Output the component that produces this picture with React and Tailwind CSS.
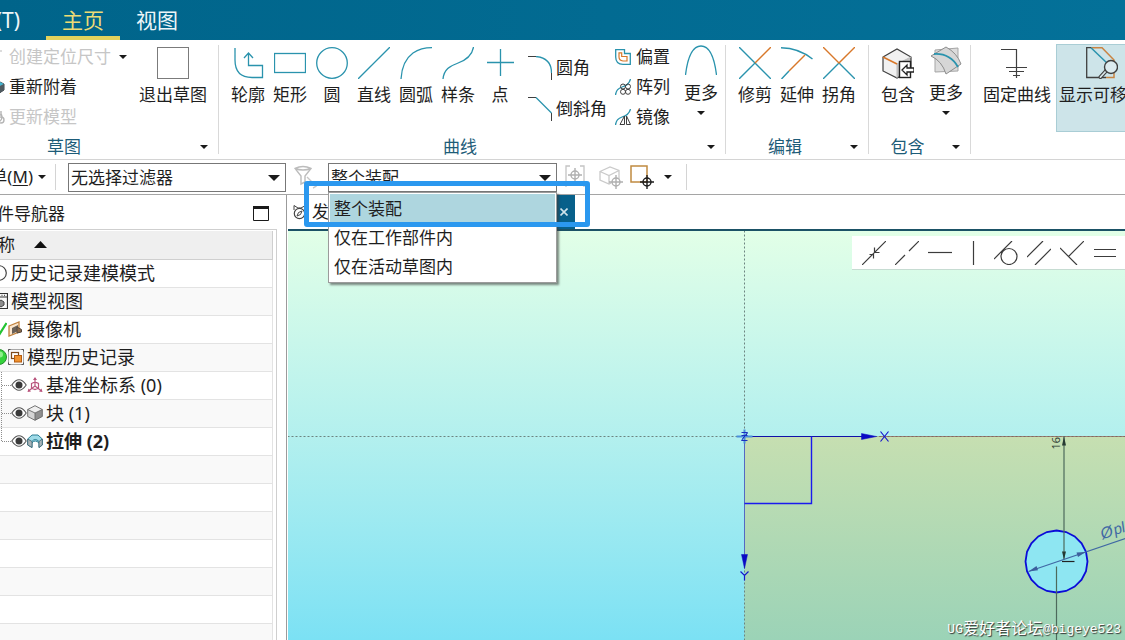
import React from "react";

const TEAL = "#2a93ad";
const INK = "#3f3f3f";
const ORANGE = "#d8782a";

function Icon({ w = 32, h = 32, children, className = "" }) {
  return (
    <svg
      width={w}
      height={h}
      viewBox={`0 0 ${w} ${h}`}
      fill="none"
      aria-hidden="true"
      className={`shrink-0 ${className}`}
    >
      {children}
    </svg>
  );
}

function Caret({ large = false, className = "" }) {
  return large ? (
    <Icon w={12} h={6} className={className}>
      <path d="M0 0H12L6 6Z" fill="#1a1a1a" />
    </Icon>
  ) : (
    <Icon w={8} h={4} className={className}>
      <path d="M0 0H8L4 4Z" fill="#1a1a1a" />
    </Icon>
  );
}

function Group({ label, className = "", bodyClass = "", children }) {
  return (
    <section className={`flex shrink-0 flex-col pt-0.5 ${className}`}>
      <div className={`flex h-[90px] items-start ${bodyClass}`}>{children}</div>
      <div className="flex h-[27px] items-center pt-[3px]">
        <span className="flex-1 text-center text-[#1d5c78]">{label}</span>
        <button aria-label={`${label}选项`} className="flex w-6 items-center pl-1.5">
          <Caret />
        </button>
      </div>
    </section>
  );
}

function Divider() {
  return <div className="my-[5px] w-px shrink-0 bg-[#d9d9d9]" />;
}

function BigButton({ label, className = "w-[42px]", children }) {
  return (
    <button className={`flex shrink-0 flex-col items-center gap-1 pt-[5px] ${className}`}>
      {children}
      <span className="leading-6">{label}</span>
    </button>
  );
}

function MoreButton({ className = "w-[42px]", name, children }) {
  return (
    <button aria-label={name} className={`flex shrink-0 flex-col items-center pt-[3px] ${className}`}>
      {children}
      <span className="mt-1 leading-6">更多</span>
      <Caret className="mt-1.5" />
    </button>
  );
}

function SmallButton({ label, className = "", disabled = false, children }) {
  return (
    <button
      disabled={disabled}
      className={`flex items-center whitespace-nowrap ${disabled ? "text-[#c6c6c6]" : ""} ${className}`}
    >
      {children}
      {label}
    </button>
  );
}

function Header() {
  return (
    <header className="flex h-10 shrink-0 items-stretch bg-linear-to-r from-[#00648a] to-[#047199] text-[21px] text-[#eef6f8]">
      <button className="flex w-[46px] items-center justify-end overflow-hidden pt-0.5 pr-[26px] whitespace-nowrap">
        工具(T)
      </button>
      <button className="border-b-4 border-[#e3d25c] px-4 pt-1 leading-8 text-[#eddc75]">主页</button>
      <button className="border-b-4 border-transparent px-4 pt-1 leading-8">视图</button>
    </header>
  );
}

function Ribbon() {
  return (
    <div className="flex shrink-0 overflow-hidden border-b border-[#d4d4d4] bg-white text-[17px] leading-6 text-[#1e1e1e]">
      <Group label="草图" className="-ml-[66px] w-[284px]" bodyClass="pl-[55px]">
        <div className="flex flex-col">
          <div className="flex items-center gap-2">
            <SmallButton label="创建定位尺寸" disabled className="h-[30px] gap-1">
              <Icon w={16} h={16}>
                <path d="M2 14V2H13" stroke="#b9b9b9" />
              </Icon>
            </SmallButton>
            <button aria-label="创建定位尺寸选项">
              <Caret />
            </button>
          </div>
          <SmallButton label="重新附着" className="h-[30px] gap-1">
            <Icon w={16} h={16}>
              <path d="M2 5L9 2L15 5V11L9 15L2 12Z" fill="#77848b" stroke="#3c464b" />
              <path d="M2 5L9 2L15 5L9 8Z" fill="#43b5d0" />
              <path d="M9 8V15L15 11V5Z" fill="#4f5a60" />
            </Icon>
          </SmallButton>
          <SmallButton label="更新模型" disabled className="h-[30px] gap-1">
            <Icon w={16} h={16}>
              <path d="M3 11a5 5 0 1 0 9-6M12 2v4H8" stroke="#b5b5b5" strokeWidth="1.4" />
              <circle cx="12" cy="11" r="3" stroke="#b5b5b5" strokeWidth="1.4" />
            </Icon>
          </SmallButton>
        </div>
        <BigButton label="退出草图" className="ml-3 w-[68px] whitespace-nowrap">
          <Icon>
            <rect x="0.5" y="0.5" width="31" height="31" stroke="#7b7b7b" />
          </Icon>
        </BigButton>
      </Group>
      <Divider />

      <Group label="曲线" className="w-[506px]" bodyClass="pl-2">
        <BigButton label="轮廓">
          <Icon>
            <path d="M3 1V13Q3 30.5 20 30.5H30.500V18.500H16.500V6M12 11L16.500 6L21 11" stroke={TEAL} strokeWidth="1.3" />
          </Icon>
        </BigButton>
        <BigButton label="矩形">
          <Icon>
            <rect x="0.5" y="6.500" width="31" height="19" stroke={TEAL} strokeWidth="1.3" />
          </Icon>
        </BigButton>
        <BigButton label="圆">
          <Icon>
            <circle cx="16" cy="16" r="15.300" stroke={TEAL} strokeWidth="1.3" />
          </Icon>
        </BigButton>
        <BigButton label="直线">
          <Icon>
            <path d="M0 32L32 0" stroke={TEAL} strokeWidth="1.3" />
          </Icon>
        </BigButton>
        <BigButton label="圆弧">
          <Icon>
            <path d="M1 32Q2 14 13 6Q21 0.700 32 0.700" stroke={TEAL} strokeWidth="1.300" />
          </Icon>
        </BigButton>
        <BigButton label="样条">
          <Icon>
            <path d="M1 32C2 22 8 19 15 16.500S30 10 31.500 0" stroke={TEAL} strokeWidth="1.3" />
          </Icon>
        </BigButton>
        <BigButton label="点">
          <Icon>
            <path d="M3 15.500H30M16.500 2V29" stroke={TEAL} strokeWidth="1.3" />
          </Icon>
        </BigButton>
        <div className="flex flex-col pt-[5px] pl-[7px]">
          <SmallButton label="圆角" className="h-[41px] gap-1">
            <Icon w={24} h={24}>
              <path d="M0 0.500H8M23.500 17V24" stroke={INK} />
              <path d="M8 0.500Q23.500 2 23.500 17" stroke={TEAL} strokeWidth="1.3" />
            </Icon>
          </SmallButton>
          <SmallButton label="倒斜角" className="h-[41px] gap-1">
            <Icon w={24} h={24}>
              <path d="M0 0.500H8M23.500 16V24" stroke={INK} />
              <path d="M8 0.500L23.500 16" stroke={TEAL} strokeWidth="1.3" />
            </Icon>
          </SmallButton>
        </div>
        <div className="flex flex-col pl-2">
          <SmallButton label="偏置" className="h-[30px] gap-[5px]">
            <Icon w={16} h={16}>
              <path d="M0.700 0.700H9.500V4.500H15.300V15.300H8Q0.700 15.300 0.700 8Z" stroke={TEAL} strokeWidth="1.300" />
              <path d="M4 3.800H6.700V7.500H12V12H8Q4 11.500 4 8Z" stroke={ORANGE} strokeWidth="1.200" />
            </Icon>
          </SmallButton>
          <SmallButton label="阵列" className="h-[30px] gap-[5px]">
            <Icon w={16} h={16}>
              <path d="M0.500 16Q1 10 7 8Q14 6 15.500 0" stroke={TEAL} strokeWidth="1.300" />
              <g stroke={INK}>
                <circle cx="8" cy="7.500" r="2.500" />
                <circle cx="13" cy="7.500" r="2.500" />
                <circle cx="8" cy="12.800" r="2.500" />
                <circle cx="13" cy="12.800" r="2.500" />
              </g>
            </Icon>
          </SmallButton>
          <SmallButton label="镜像" className="h-[30px] gap-[5px]">
            <Icon w={16} h={16}>
              <path d="M0.500 16Q1 10 7 8Q14 6 15.500 0" stroke={TEAL} strokeWidth="1.300" />
              <path d="M9.500 7V15.500H5ZM11.500 7V15.500H15.500Z" stroke={INK} fill="#fff" />
            </Icon>
          </SmallButton>
        </div>
        <MoreButton name="更多曲线" className="ml-[10px] w-[42px]">
          <Icon>
            <path d="M0.500 30Q4 1 16 1T31.500 30" stroke={TEAL} strokeWidth="1.3" />
          </Icon>
        </MoreButton>
      </Group>
      <Divider />

      <Group label="编辑" className="w-[142px]" bodyClass="pl-2">
        <BigButton label="修剪">
          <Icon>
            <path d="M0 0L32 32M0 32L16 16" stroke={TEAL} strokeWidth="1.400" />
            <path d="M16 16L32 0" stroke={ORANGE} strokeWidth="1.400" />
          </Icon>
        </BigButton>
        <BigButton label="延伸">
          <Icon>
            <path d="M0 0.700Q18 1 31.500 12M0.500 32L8 24" stroke={TEAL} strokeWidth="1.400" />
            <path d="M8 24L24 8" stroke={ORANGE} strokeWidth="1.400" />
          </Icon>
        </BigButton>
        <BigButton label="拐角">
          <Icon>
            <path d="M0 32L16 16L32 32" stroke={TEAL} strokeWidth="1.400" />
            <path d="M0 0L16 16L32 0" stroke={ORANGE} strokeWidth="1.400" />
          </Icon>
        </BigButton>
      </Group>
      <Divider />

      <Group label="包含" className="w-[101px]" bodyClass="pl-[5px]">
        <BigButton label="包含" className="w-12">
          <Icon>
            <path d="M1 10L15 2L29 10V24L15 31L1 24Z" fill="#f1f1f1" />
            <path d="M15 17L29 10V24L15 31Z" fill="#c3c3c3" />
            <path d="M1 10L15 2L29 10V24L15 31L1 24Z" stroke={INK} strokeWidth="1.200" />
            <path d="M29 10L15 17V31" stroke="#bdbdbd" />
            <path d="M1 10L15 17" stroke={ORANGE} strokeWidth="1.600" />
            <rect x="17.500" y="14.500" width="11" height="16" fill="#fff" stroke="#222" strokeWidth="1.400" />
            <path d="M20 23L25 18V21H32V25H25V28Z" fill="#fff" stroke="#222" strokeWidth="1.300" />
          </Icon>
        </BigButton>
        <MoreButton name="更多包含" className="w-12">
          <Icon>
            <path d="M5 5L28 3V26L5 27Z" fill="#dcdcdc" stroke="#a5a5a5" />
            <path d="M1 11L16 2Q27 8 31 19L16 29Q12 16 1 11Z" fill="#d6d6d6" stroke="#8d8d8d" />
            <path d="M4 9Q20 8 28 22" stroke={TEAL} strokeWidth="1.800" />
          </Icon>
        </MoreButton>
      </Group>
      <Divider />

      <div className="flex shrink-0 items-start gap-[5px] pt-0.5 pl-3">
        <BigButton label="固定曲线" className="w-[68px] whitespace-nowrap">
          <Icon>
            <path d="M0 2.500H15.500V31M5 20.500H26M8 24.500H23M12 28.500H19" stroke={INK} strokeWidth="1.200" />
          </Icon>
        </BigButton>
        <BigButton
          label="显示可移动"
          className="mt-0.5 h-[88px] w-[91px] border border-[#a9cdd5] bg-[#cde4e9] !pt-0.5 whitespace-nowrap"
        >
          <Icon>
            <path d="M5 0.700H0.700V30.500H20" stroke={INK} strokeWidth="1.300" />
            <path d="M5 0.700H16L28 13V30.500H20" stroke="#c98443" strokeWidth="1.500" />
            <path d="M5 0.700L22 17" stroke={TEAL} strokeWidth="1.500" />
            <path d="M20 24L14.500 30" stroke={INK} strokeWidth="4" strokeLinecap="round" />
            <path d="M20 24L14.500 30" stroke="#d9e6e9" strokeWidth="1.800" strokeLinecap="round" />
            <circle cx="25" cy="20" r="6.500" fill="#dcebef" stroke={INK} strokeWidth="1.400" />
          </Icon>
        </BigButton>
      </div>
    </div>
  );
}

function Crosshair({ x, y, color }) {
  return (
    <g stroke={color} strokeWidth="1.400">
      <circle cx={x} cy={y} r="4" />
      <path d={`M${x - 7} ${y}H${x + 7}M${x} ${y - 7}V${y + 7}`} />
    </g>
  );
}

function SelectionBar() {
  const options = ["整个装配", "仅在工作部件内", "仅在活动草图内"];
  return (
    <div className="flex h-[35px] shrink-0 items-center border-b border-[#a5a5a5] bg-white text-[17px] text-[#1e1e1e]">
      <button className="flex w-[33px] items-center justify-end overflow-hidden whitespace-nowrap">
        菜单(<u className="underline-offset-2">M</u>)
      </button>
      <Caret className="ml-[5px]" />
      <div className="ml-[9px] h-[26px] w-px bg-[#d4d4d4]" />
      <div className="relative ml-3">
        <select
          aria-label="类型过滤器"
          className="block h-[29px] w-[218px] appearance-none border border-[#777] bg-white pt-0.5 pl-0.5 leading-6"
        >
          <option>无选择过滤器</option>
        </select>
        <Caret large className="pointer-events-none absolute top-3 right-1.5" />
      </div>
      <button aria-label="重置过滤器" className="ml-2">
        <Icon w={24} h={24}>
          <path d="M1 3.500Q9 -0.500 17 3.500L11 11V17L7 19V11ZM1 3.500Q9 6.500 17 3.500" stroke="#bcbcbc" strokeWidth="1.400" />
          <path d="M13 12L18 17M19 23Q22 22 24 19" stroke="#c6c6c6" strokeWidth="1.400" />
        </Icon>
      </button>
      <div className="relative ml-2.5">
        <select
          aria-label="选择范围"
          className="block h-[29px] w-[229px] appearance-none border border-[#777] bg-white pt-0.5 pl-0.5 leading-6"
        >
          {options.map((o) => (
            <option key={o}>{o}</option>
          ))}
        </select>
        <Caret large className="pointer-events-none absolute top-3 right-1.5" />
        <ul
          role="listbox"
          aria-label="选择范围选项"
          className="absolute top-full left-0 z-20 w-[229px] border border-[#9b9b9b] bg-white p-px shadow-[2px_2px_2px_rgba(60,60,60,0.6)]"
        >
          {options.map((o, i) => (
            <li
              key={o}
              role="option"
              aria-selected={i === 0}
              className={`h-[29px] pl-1 leading-[29px] ${i === 0 ? "bg-[#aed6df]" : ""}`}
            >
              {o}
            </li>
          ))}
        </ul>
        <div className="pointer-events-none absolute top-[18px] -left-6 z-30 h-[46px] w-[286px] rounded-[3px] border-[5px] border-[#2b98ef]" />
      </div>
      <button aria-label="捕捉点" className="ml-2">
        <Icon w={20} h={24}>
          <path d="M5 1H1V22M15 1H19V22" stroke="#c4c4c4" strokeWidth="1.300" />
          <Crosshair x={10} y={10} color="#b0b0b0" />
        </Icon>
      </button>
      <button aria-label="实体点" className="ml-3.5">
        <Icon w={24} h={24}>
          <path d="M1 6.500L11 2L20 5.500V14L10 19L1 15ZM1 6.500L10 10.500L20 5.500M10 10.500V19" stroke="#cacaca" strokeWidth="1.300" />
          <circle cx="17" cy="18" r="5" fill="#fff" />
          <Crosshair x={17} y={17} color="#b0b0b0" />
        </Icon>
      </button>
      <button aria-label="矩形选择" className="ml-[7px] flex items-center gap-2">
        <Icon w={26} h={24}>
          <rect x="1" y="1" width="16" height="16" stroke="#c08a40" strokeWidth="1.500" />
          <Crosshair x={17} y={17} color="#1d1d1d" />
        </Icon>
        <Caret />
      </button>
      <div className="ml-3.5 h-[26px] w-px bg-[#d4d4d4]" />
    </div>
  );
}

const EyeIcon = () => (
  <Icon w={16} h={16}>
    <path d="M0.800 8Q8 -2.500 15.200 8Q8 18.500 0.800 8Z" fill="#fff" stroke="#555" strokeWidth="1.100" />
    <circle cx="8" cy="8" r="3.500" fill="#3a3a3a" />
  </Icon>
);

const treeRows = [
  {
    label: "历史记录建模模式",
    lead: "-ml-[9px] gap-1",
    icon: (
      <Icon w={16} h={16}>
        <circle cx="8" cy="8" r="7.300" stroke="#444" strokeWidth="1.200" />
      </Icon>
    ),
  },
  {
    label: "模型视图",
    lead: "-ml-2 gap-[3px]",
    icon: (
      <Icon w={16} h={16}>
        <path d="M0.500 0.500H15.500V15.500H0.500ZM0.500 4H15.500" stroke="#333" strokeWidth="1.200" />
        <path d="M7 2.300H14" stroke="#333" strokeDasharray="1 1.500" />
        <path d="M9 7L12 9V12L9 14L6 12V9Z" fill="#8c8c8c" stroke="#444" />
      </Icon>
    ),
  },
  {
    label: "摄像机",
    lead: "-ml-[9px] gap-1",
    icon: (
      <span className="flex">
        <Icon w={16} h={16}>
          <path d="M4 9L8 14L15.500 2" stroke="#23c332" strokeWidth="2.200" />
        </Icon>
        <Icon w={16} h={16}>
          <path d="M2 5L12 1V11L2 15Z" fill="#fbe6cd" stroke="#c0803c" strokeWidth="1.300" />
          <path d="M5 7L11 4V10L5 13Z" fill="#6b6158" />
          <path d="M10 6L14.500 8.500V11L10 12Z" fill="#8d6a48" stroke="#54483e" />
        </Icon>
      </span>
    ),
  },
  {
    label: "模型历史记录",
    lead: "-ml-[9px] gap-[3px]",
    icon: (
      <span className="flex gap-px">
        <Icon w={16} h={16}>
          <circle cx="8" cy="8" r="7.500" fill="#35d33c" stroke="#258f2c" />
          <circle cx="9" cy="5.500" r="3" fill="#8ff08c" />
        </Icon>
        <Icon w={16} h={16}>
          <path d="M0.500 0.500H15.500V15.500H0.500Z" stroke="#a8a8a8" />
          <path d="M0.500 2.500V0.500H2.500M13.500 0.500H15.500V2.500M15.500 13.500V15.500H13.500M2.500 15.500H0.500V13.500" stroke="#555" />
          <rect x="3.500" y="3.500" width="7" height="6" fill="#fff" stroke="#7c4a1d" strokeWidth="1.200" />
          <rect x="6.500" y="6.500" width="7" height="6.500" fill="#f0922f" stroke="#b35b10" />
        </Icon>
      </span>
    ),
  },
  {
    label: "基准坐标系 (0)",
    child: true,
    icon: (
      <Icon w={16} h={16}>
        <path d="M8 1V9L1.500 14M8 9L14.500 14M4.500 6.500L8 5L11.500 6.500V11L8 12.500L4.500 11Z" stroke="#b9557d" strokeWidth="1.200" />
        <path d="M6 3L8 0L10 3ZM0.500 15L1.500 11.500L4 14.500ZM15.500 15L14.500 11.500L12 14.500Z" fill="#b9557d" />
      </Icon>
    ),
  },
  {
    label: "块 (1)",
    child: true,
    icon: (
      <Icon w={16} h={16}>
        <path d="M0.700 4.500L8 0.700L15.300 4.500V11.500L8 15.300L0.700 11.500Z" fill="#d4d4d4" />
        <path d="M8 8L15.300 4.500V11.500L8 15.300Z" fill="#8f8f8f" />
        <path d="M0.700 4.500L8 0.700L15.300 4.500L8 8Z" fill="#efefef" />
        <path d="M0.700 4.500L8 0.700L15.300 4.500V11.500L8 15.300L0.700 11.500ZM0.700 4.500L8 8L15.300 4.500M8 8V15.300" stroke="#666" strokeWidth="0.900" />
      </Icon>
    ),
  },
  {
    label: "拉伸 (2)",
    child: true,
    last: true,
    icon: (
      <Icon w={16} h={16}>
        <path d="M0.700 6L5 2H11L15.300 6V12L12 14.500V10Q8 6 5 10V14.500L0.700 12Z" fill="#9fdbe8" stroke="#2c7f95" />
        <path d="M0.700 6L5 8.500V14.500L0.700 12ZM15.300 6L12 8.500V14.500L15.300 12Z" fill="#a9b4b8" stroke="#3f6571" strokeWidth="0.800" />
        <path d="M5 8.500Q8 4.500 12 8.500" stroke="#2c7f95" />
      </Icon>
    ),
  },
];

const emptyRows = [0, 1, 2, 3, 4, 5, 6];

function Navigator() {
  return (
    <aside className="flex w-[286px] shrink-0 flex-col overflow-hidden bg-white">
      <div className="flex h-[34px] items-center pr-[17px] text-[17px] text-[#1e1e1e]">
        <h2 className="flex w-[65px] justify-end overflow-hidden pt-1 whitespace-nowrap">部件导航器</h2>
        <button aria-label="最大化" className="mt-0.5 ml-auto">
          <Icon w={16} h={15}>
            <path d="M0.500 0.500H15.500V14.500H0.500Z" stroke="#1a1a1a" />
            <path d="M0 0H16V3H0Z" fill="#1a1a1a" />
          </Icon>
        </button>
      </div>
      <div className="w-[277px] flex-1 overflow-hidden border-t border-r border-[#cfcfcf] pt-px pr-[3px]">
        <table className="w-full table-fixed border-collapse text-[18px] text-[#1e1e1e]">
          <thead>
            <tr className="h-7 bg-[#efefef]">
              <th scope="col" className="border-r border-b border-[#cfcfcf] p-0 text-left text-[17px] font-normal">
                <div className="flex items-center gap-[19px]">
                  <span className="flex w-[15px] justify-end overflow-hidden whitespace-nowrap">名称</span>
                  <Icon w={13} h={7}>
                    <path d="M0 7L6.500 0L13 7Z" fill="#111" />
                  </Icon>
                </div>
              </th>
            </tr>
          </thead>
          <tbody>
            {treeRows.map((r) => (
              <tr key={r.label} className="h-7 even:bg-[#f9f9f9]">
                <td className="border-r border-b border-[#e3e3e3] p-0">
                  {r.child ? (
                    <div className={`flex h-[27px] items-center whitespace-nowrap ${r.last ? "font-bold" : ""}`}>
                      <Icon w={11} h={27}>
                        <path
                          d={r.last ? "M1.500 0V14M2 13.500H11" : "M1.500 0V28M2 13.500H11"}
                          stroke="#8d8d8d"
                          strokeDasharray="1 1"
                        />
                      </Icon>
                      <EyeIcon />
                      <span className="mr-[3px] flex">{r.icon}</span>
                      {r.label}
                    </div>
                  ) : (
                    <div className={`flex h-[27px] items-center whitespace-nowrap ${r.lead}`}>
                      {r.icon}
                      {r.label}
                    </div>
                  )}
                </td>
              </tr>
            ))}
            {emptyRows.map((n) => (
              <tr key={n} className="h-7 odd:bg-white even:bg-[#f9f9f9]">
                <td className="border-r border-b border-[#e3e3e3] p-0" />
              </tr>
            ))}
          </tbody>
        </table>
      </div>
    </aside>
  );
}

const constraints = [
  ["重合", "M0 24L24 0M7.500 13.500H11.500V17.500M12.500 6.500V11.500H17.500"],
  ["共线", "M0 24L10 14M14 10L24 0"],
  ["水平", "M0 11.500H24"],
  ["竖直", "M12.500 0V24"],
  ["相切", "M0 18L18 0M23 15.500A8 8 0 1 1 7 15.500A8 8 0 1 1 23 15.500"],
  ["平行", "M0 16L16 0M8 24L24 8"],
  ["垂直", "M0 7L17 24M8.500 15.500L24 0"],
  ["等长", "M1 8.500H23M1 15.500H23"],
];

// All drawing coordinates are relative to the sketch origin.
function Sketch() {
  return (
    <svg className="absolute inset-0 h-full w-full" aria-label="草图视图">
      <defs>
        <linearGradient id="face" gradientUnits="userSpaceOnUse" x1="0" y1="0" x2="0" y2="204">
          <stop offset="0" stopColor="#c6dfb1" />
          <stop offset="1" stopColor="#9bd3b7" />
        </linearGradient>
      </defs>
      <g transform="translate(456.5 205.5)" fill="none">
        <path d="M0 0H3000V3000H0Z" fill="url(#face)" />
        <path d="M0 -206V3000M-457 0H3000" stroke="#6c8480" strokeDasharray="2 2" />
        <path d="M134 0H3000" stroke="#8d5b50" strokeOpacity="0.7" />
        <path d="M0 0V118" stroke="#5468c4" />
        <path d="M0 0H118" stroke="#1010a8" strokeWidth="1.200" />
        <path d="M67 0V67H0" stroke="#1a1aee" strokeWidth="1.400" />
        <path d="M117 -3L132 0L117 3ZM-3 118L0 132L3 118Z" fill="#0a0ac4" stroke="#0a0ac4" strokeWidth="0.500" />
        <path d="M136 -5L144 5M144 -5L136 5M-4 135L0 139L4 135M0 139V144" stroke="#1515cd" strokeWidth="1.200" />
        <path d="M-8 0H8M0 -7V7" stroke="#4a8fdc" strokeWidth="2" />
        <path d="M-3 -4H3L-3 4H3M-3 -1H3M-2 2L3 -3" stroke="#1b2fc0" strokeWidth="1" />

        <polygon
          points="312,94 321.6,95.500 330.200,99.900 337.100,106.800 341.500,115.400 343,125 341.500,134.600 337.100,143.200 330.200,150.100 321.600,154.500 312,156 302.400,154.500 293.800,150.100 286.900,143.200 282.500,134.600 281,125 282.500,115.400 286.900,106.800 293.800,99.900 302.400,95.500"
          fill="#8ee6f2"
          stroke="#0b0bd8"
          strokeWidth="1.800"
        />
        <path d="M319.500 0V123M312 130V3000" stroke="#4d6a5c" strokeWidth="1.200" />
        <path d="M317.500 125H330" stroke="#222" strokeWidth="1.200" />
        <path d="M319.500 0L321.500 9H317.500ZM319.500 123L321.500 115H317.500Z" fill="#263a33" />
        <path d="M284 135L560 41" stroke="#4068a4" strokeWidth="1.200" />
        <path d="M284 135L292 129.500L293.500 133.800ZM341 115.500L332 116L333.500 120.500Z" fill="#3c5f9d" />
        <text
          transform="translate(315 13) rotate(-90)"
          fill="#27362f"
          fontSize="11"
          className="font-['Open_Sans','Liberation_Sans',sans-serif]"
        >
          16
        </text>
        <text
          transform="translate(358 103) rotate(-19)"
          fill="#4068a4"
          fontSize="16"
          className="font-['Liberation_Sans',sans-serif] italic"
        >
          Ø<tspan dx="1" fontSize="15">pl</tspan>
        </text>
      </g>
    </svg>
  );
}

function Viewport() {
  return (
    <main className="flex min-w-0 flex-1 flex-col border-l border-[#9b9b9b] bg-white pl-px">
      <div className="flex h-9 shrink-0 items-stretch border-b-2 border-[#1b5266] text-[17px] text-[#1e1e1e]">
        <div className="flex w-[287px] items-stretch justify-between">
          <button className="flex items-center gap-1 pl-1">
            <Icon w={16} h={16}>
              <circle cx="7.500" cy="9.500" r="5.200" stroke="#444" strokeWidth="1.200" />
              <path d="M2 6V1.500L6 4H9L13.500 1.500V6M5 12L6.500 8.500L10 7L8.500 10.500Z" stroke="#444" />
            </Icon>
            发
          </button>
          <button aria-label="关闭" className="flex w-[23px] items-center justify-center bg-[#07608a]">
            <Icon w={8} h={8}>
              <path d="M0.500 0.500L7.500 7.500M7.500 0.500L0.500 7.500" stroke="#cfe3ea" strokeWidth="1.600" />
            </Icon>
          </button>
        </div>
      </div>
      <div className="relative flex-1 overflow-hidden bg-linear-to-b from-[#e2ffe7] via-[#b3f0ee] to-[#7be1f4]">
        <Sketch />
        <div className="absolute top-[5px] right-0 flex h-[34px] w-[273px] items-start gap-[9px] border-b border-[#c6dcd2] bg-white pt-[5px] pl-2.5">
          {constraints.map(([name, d]) => (
            <button key={name} aria-label={name} className="shrink-0">
              <Icon w={24} h={24}>
                <path d={d} stroke="#3c3c3c" strokeWidth="1.200" />
              </Icon>
            </button>
          ))}
        </div>
        <p className="absolute right-1 bottom-0 flex items-center font-['Liberation_Mono','Noto_Sans_CJK_SC',monospace] text-[13px] leading-5 whitespace-nowrap text-white [text-shadow:1px_1px_1px_#333]">
          UG<span className="text-[16px]">爱好者论坛</span>@bigeye523
        </p>
      </div>
    </main>
  );
}

export default function App() {
  return (
    <div className="flex h-screen flex-col overflow-hidden bg-white font-['Noto_Sans','Noto_Sans_CJK_SC',sans-serif]">
      <Header />
      <Ribbon />
      <SelectionBar />
      <div className="flex min-h-0 flex-1">
        <Navigator />
        <Viewport />
      </div>
    </div>
  );
}
